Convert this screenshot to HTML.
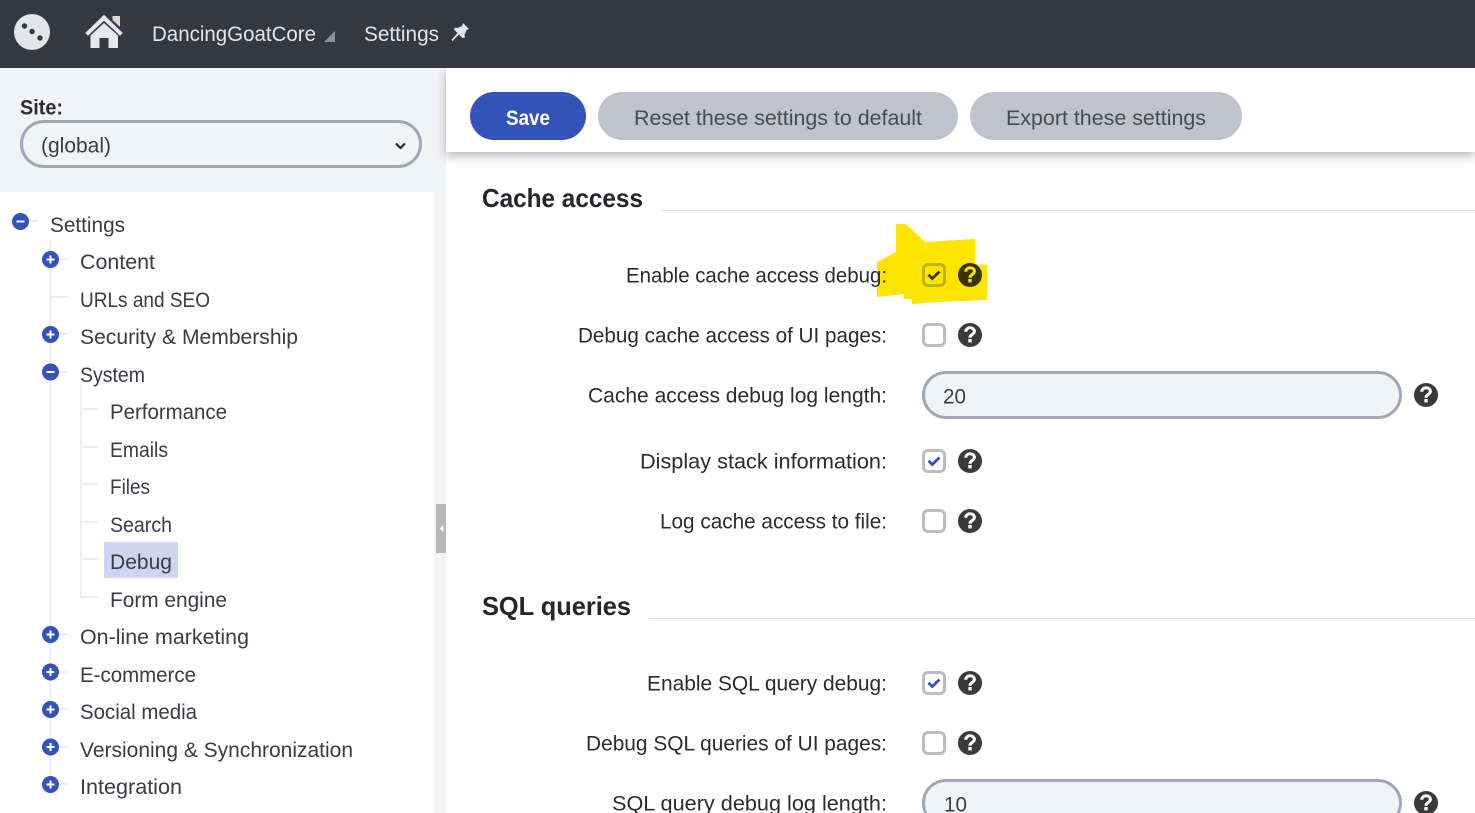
<!DOCTYPE html>
<html lang="en"><head><meta charset="utf-8"><title>Settings</title>
<style>
html,body{margin:0;padding:0;width:1475px;height:813px;overflow:hidden;background:#fff}
svg{display:block;position:absolute;left:0;top:0}
text{font-family:"Liberation Sans",sans-serif;font-size:21px;fill:#3a3c42}
.l{fill:#2c2c30}
.b{font-weight:bold}
.h{font-size:26px;font-weight:bold;fill:#25262a}
</style></head><body>
<svg width="1475" height="813" viewBox="0 0 1475 813" xmlns="http://www.w3.org/2000/svg">
<defs>
<filter id="sh" x="-5%" y="-50%" width="110%" height="200%"><feDropShadow dx="0" dy="4" stdDeviation="5" flood-color="#000" flood-opacity=".28"/></filter>
<g id="help"><circle r="12" fill="#3a3a3a"/><path d="M-4.200-3.300C-4.200-5.800-2.400-7.200 0-7.200 2.600-7.200 4.400-5.700 4.400-3.500 4.400-.6 0-.6 0 2.700" fill="none" stroke="#fff" stroke-width="3"/><rect x="-1.700" y="4" width="3.400" height="3.400" fill="#fff"/></g>
<g id="cb"><rect x="-10.500" y="-10.500" width="21" height="21" rx="4.500" fill="#fff" stroke="#bbbdc3" stroke-width="3"/></g>
<g id="cc"><rect x="-10.500" y="-10.500" width="21" height="21" rx="4.500" fill="#fff" stroke="#bbbdc3" stroke-width="3"/><path d="M-5.500 -.2-1.700 3.500 5.500-3.500" fill="none" stroke="#3552b8" stroke-width="2.800"/></g>
<g id="plus"><circle r="8.500" fill="#3552b8"/><path d="M-4 0H4M0-4V4" stroke="#fff" stroke-width="2"/></g>
<g id="minus"><circle r="8.500" fill="#3552b8"/><path d="M-4 0H4" stroke="#fff" stroke-width="2"/></g>
</defs>

<!-- main background -->
<rect x="446" y="68" width="1029" height="745" fill="#fff"/>

<!-- sidebar -->
<rect x="0" y="68" width="446" height="745" fill="#f2f3f5"/>
<rect x="0" y="192" width="434" height="621" fill="#fff"/>
<text x="20" y="114.500" class="l b" textLength="43" lengthAdjust="spacingAndGlyphs">Site:</text>
<rect x="21.500" y="121.500" width="399" height="45" rx="22.500" fill="#f2f3f5" stroke="#a1a7b3" stroke-width="3"/>
<text x="41" y="152.500" textLength="70" lengthAdjust="spacingAndGlyphs">(global)</text>
<path d="M396 143.500 400.500 148 405 143.500" fill="none" stroke="#25262a" stroke-width="2.200"/>

<!-- tree lines -->
<g stroke="#e6e8ea" stroke-width="1.500" fill="none">
<path d="M29 221H38"/>
<path d="M50.500 241V785"/>
<path d="M59 259H68M50 297H68M59 334H68M59 372H68M59 634H68M59 672H68M59 709H68M59 747H68M59 784H68"/>
<path d="M81 384V597H98M81 409H98M81 447H98M81 484H98M81 522H98M81 559H98"/>
</g>
<use href="#minus" x="20.500" y="221.500"/>
<use href="#plus" x="50.500" y="259.500"/>
<use href="#plus" x="50.500" y="334.500"/>
<use href="#minus" x="50.500" y="372"/>
<use href="#plus" x="50.500" y="634.500"/>
<use href="#plus" x="50.500" y="672"/>
<use href="#plus" x="50.500" y="709.500"/>
<use href="#plus" x="50.500" y="747"/>
<use href="#plus" x="50.500" y="784.500"/>
<rect x="104" y="542" width="74" height="36" fill="#cdd6f1"/>

<text x="50" y="232" textLength="75" lengthAdjust="spacingAndGlyphs">Settings</text>
<text x="80" y="269" textLength="75" lengthAdjust="spacingAndGlyphs">Content</text>
<text x="80" y="307" textLength="130" lengthAdjust="spacingAndGlyphs">URLs and SEO</text>
<text x="80" y="344" textLength="218" lengthAdjust="spacingAndGlyphs">Security &amp; Membership</text>
<text x="80" y="382" textLength="65" lengthAdjust="spacingAndGlyphs">System</text>
<text x="110" y="419" textLength="117" lengthAdjust="spacingAndGlyphs">Performance</text>
<text x="110" y="457" textLength="58" lengthAdjust="spacingAndGlyphs">Emails</text>
<text x="110" y="494" textLength="40" lengthAdjust="spacingAndGlyphs">Files</text>
<text x="110" y="532" textLength="62" lengthAdjust="spacingAndGlyphs">Search</text>
<text x="110" y="569" textLength="62" lengthAdjust="spacingAndGlyphs">Debug</text>
<text x="110" y="607" textLength="117" lengthAdjust="spacingAndGlyphs">Form engine</text>
<text x="80" y="644" textLength="169" lengthAdjust="spacingAndGlyphs">On-line marketing</text>
<text x="80" y="682" textLength="116" lengthAdjust="spacingAndGlyphs">E-commerce</text>
<text x="80" y="719" textLength="117" lengthAdjust="spacingAndGlyphs">Social media</text>
<text x="80" y="757" textLength="273" lengthAdjust="spacingAndGlyphs">Versioning &amp; Synchronization</text>
<text x="80" y="794" textLength="102" lengthAdjust="spacingAndGlyphs">Integration</text>

<!-- collapse handle -->
<rect x="436" y="504" width="10" height="49" fill="#b7b7b9"/>
<path d="M443.500 525V532L439.500 528.500Z" fill="#fff"/>

<!-- toolbar -->
<rect x="446" y="68" width="1029" height="84" fill="#fff" filter="url(#sh)"/>
<rect x="470" y="92" width="116" height="48" rx="24" fill="#3552b8"/>
<text x="506" y="125" class="b" style="fill:#fff" textLength="44" lengthAdjust="spacingAndGlyphs">Save</text>
<rect x="598" y="92" width="360" height="48" rx="24" fill="#bfc3cc"/>
<text x="634" y="125" style="fill:#484b53" textLength="288" lengthAdjust="spacingAndGlyphs">Reset these settings to default</text>
<rect x="970" y="92" width="272" height="48" rx="24" fill="#bfc3cc"/>
<text x="1006" y="125" style="fill:#484b53" textLength="200" lengthAdjust="spacingAndGlyphs">Export these settings</text>

<!-- header -->
<rect x="0" y="0" width="1475" height="68" fill="#353840"/>
<circle cx="32" cy="32" r="18" fill="#e4e6ea"/>
<circle cx="24.500" cy="26" r="2.700" fill="#353840"/><circle cx="32" cy="31.500" r="2.700" fill="#353840"/><circle cx="40" cy="38" r="2.700" fill="#353840"/>
<path d="M86 33 104 15.500 122 33 120 35 104 20 88 35Z" fill="#e6e8ef" stroke="#e6e8ef" stroke-width="1"/>
<path d="M112.500 16H120V27L112.500 20Z" fill="#e0d6d6"/>
<path d="M90.500 35.500 104 23 118 35.500V48H108.500V38H99.500V48H90.500Z" fill="#e6e8ef"/>
<text x="152" y="41" style="fill:#e4e6ea" textLength="164" lengthAdjust="spacingAndGlyphs">DancingGoatCore</text>
<path d="M335 31V42H324Z" fill="#8f929a"/>
<text x="364" y="41" style="fill:#e4e6ea" textLength="75" lengthAdjust="spacingAndGlyphs">Settings</text>
<path d="M463 23 469 29 466.500 30 464.500 35 465 37.500 462.500 38 459 34.500 452.500 41 451.500 40 457.500 33 454 29.500 455 27.500 457.500 28 462 26Z" fill="#e4e6ea"/>

<!-- section 1 -->
<text x="482" y="207" class="h" textLength="161" lengthAdjust="spacingAndGlyphs">Cache access</text>
<rect x="661" y="210" width="814" height="1" fill="#dfe0e3"/>

<path d="M896 224H906L925 242 975 239V264L987 265V300L937 302 912 304 911 299H904V294L877 297V262L896 252Z" fill="#fde500"/>

<text x="626" y="282.500" class="l" textLength="261" lengthAdjust="spacingAndGlyphs">Enable cache access debug:</text>
<rect x="923.500" y="264.500" width="21" height="21" rx="4.500" fill="#fde500" stroke="#bcb400" stroke-width="3"/>
<path d="M928.500 274.800 932.300 278.500 939.500 271.500" fill="none" stroke="#3f3b08" stroke-width="2.800"/>
<circle cx="970" cy="275" r="12" fill="#3a3300"/>
<path d="M965.800 271.700C965.800 269.200 967.600 267.800 970 267.800 972.600 267.800 974.400 269.300 974.400 271.500 974.400 274.400 970 274.400 970 277.700" fill="none" stroke="#fde500" stroke-width="3"/>
<rect x="968.300" y="279" width="3.400" height="3.400" fill="#fde500"/>

<text x="578" y="342.500" class="l" textLength="309" lengthAdjust="spacingAndGlyphs">Debug cache access of UI pages:</text>
<use href="#cb" x="934" y="335"/><use href="#help" x="970" y="335"/>

<text x="588" y="402.500" class="l" textLength="299" lengthAdjust="spacingAndGlyphs">Cache access debug log length:</text>
<rect x="923.500" y="372.500" width="477" height="45" rx="22.500" fill="#f2f3f6" stroke="#a1a7b3" stroke-width="3"/>
<text x="943" y="403.500" textLength="23" lengthAdjust="spacingAndGlyphs">20</text>
<use href="#help" x="1426" y="395"/>

<text x="640" y="468.500" class="l" textLength="247" lengthAdjust="spacingAndGlyphs">Display stack information:</text>
<use href="#cc" x="934" y="461"/><use href="#help" x="970" y="461"/>

<text x="660" y="528.500" class="l" textLength="227" lengthAdjust="spacingAndGlyphs">Log cache access to file:</text>
<use href="#cb" x="934" y="521"/><use href="#help" x="970" y="521"/>

<!-- section 2 -->
<text x="482" y="615" class="h" textLength="149" lengthAdjust="spacingAndGlyphs">SQL queries</text>
<rect x="649" y="618" width="826" height="1" fill="#dfe0e3"/>

<text x="647" y="690.500" class="l" textLength="240" lengthAdjust="spacingAndGlyphs">Enable SQL query debug:</text>
<use href="#cc" x="934" y="683"/><use href="#help" x="970" y="683"/>

<text x="586" y="750.500" class="l" textLength="301" lengthAdjust="spacingAndGlyphs">Debug SQL queries of UI pages:</text>
<use href="#cb" x="934" y="743"/><use href="#help" x="970" y="743"/>

<text x="612" y="810.500" class="l" textLength="275" lengthAdjust="spacingAndGlyphs">SQL query debug log length:</text>
<rect x="923.500" y="780.500" width="477" height="45" rx="22.500" fill="#f2f3f6" stroke="#a1a7b3" stroke-width="3"/>
<text x="944" y="811.500" textLength="23" lengthAdjust="spacingAndGlyphs">10</text>
<use href="#help" x="1426" y="803"/>
</svg>
</body></html>
